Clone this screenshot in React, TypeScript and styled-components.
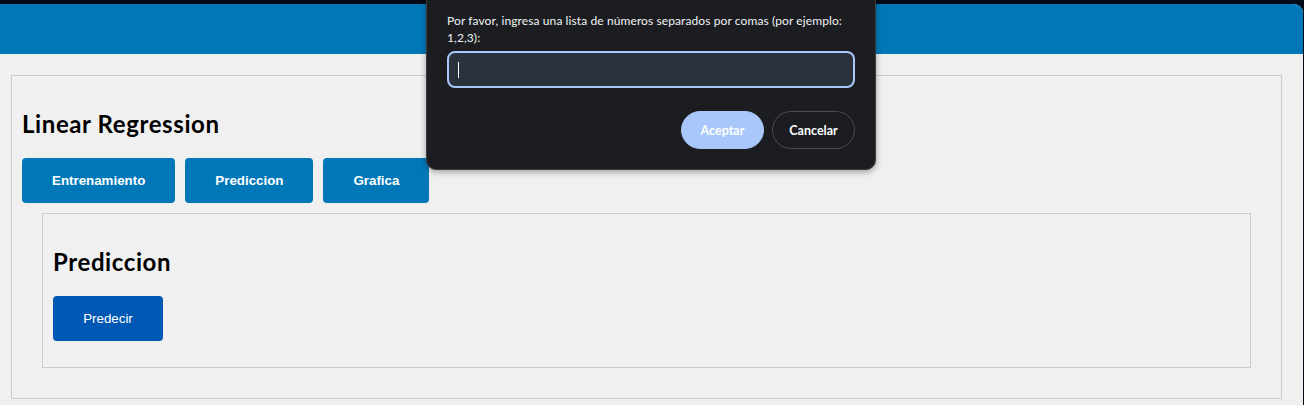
import { createGlobalStyle, styled } from "styled-components";

const GlobalStyle = createGlobalStyle`
  html, body {
    margin: 0;
    padding: 0;
    background: #020a18;
  }
  * {
    box-sizing: border-box;
  }
`;

const tabs = ["Entrenamiento", "Prediccion", "Grafica"];

const App = () => {
  return (
    <>
      <GlobalStyle />
      <Frame>
        <Header />
        <Main>
          <OuterBox>
            <Title>Linear Regression</Title>
            <TabRow>
              {tabs.map((tab) => (
                <TabButton key={tab}>{tab}</TabButton>
              ))}
            </TabRow>
            <Panel>
              <PanelTitle>Prediccion</PanelTitle>
              <PredictButton>Predecir</PredictButton>
            </Panel>
          </OuterBox>
        </Main>
      </Frame>
      <Dialog>
        <DialogText>
          Por favor, ingresa una lista de números separados por comas (por ejemplo:
          1,2,3):
        </DialogText>
        <PromptInput>
          <Caret />
        </PromptInput>
        <DialogActions>
          <PillButton $primary>Aceptar</PillButton>
          <PillButton>Cancelar</PillButton>
        </DialogActions>
      </Dialog>
    </>
  );
};

export default App;

const Frame = styled.div`
  margin: 4px 1px 0 0;
  min-height: 401px;
  background: #f0f0f0;
  border-top-right-radius: 9px;
  overflow: hidden;
`;

const Header = styled.header`
  height: 50px;
  background: #0078b8;
`;

const Main = styled.main`
  padding: 21px 21px 0 11px;
`;

const OuterBox = styled.section`
  border: 1px solid #cccccc;
  padding: 10px;
`;

const Title = styled.h2`
  margin: 23px 0 20px;
  font-family: Lato, "Open Sans", sans-serif;
  font-size: 24px;
  font-weight: 700;
  line-height: 29px;
  letter-spacing: 0.6px;
  color: #000;
`;

const TabRow = styled.div`
  display: flex;
  gap: 10px;
`;

const TabButton = styled.button`
  height: 45px;
  padding: 0 30px;
  border: none;
  border-radius: 4px;
  background: #0078b8;
  color: #fff;
  font-family: "Liberation Sans", Arial, sans-serif;
  font-size: 13.33px;
  font-weight: 700;
  cursor: pointer;
`;

const Panel = styled.div`
  margin: 10px 20px 20px;
  border: 1px solid #cccccc;
  padding: 10px 10px 26px;
`;

const PanelTitle = styled.h3`
  margin: 23px 0 20px;
  font-family: Lato, "Open Sans", sans-serif;
  font-size: 24px;
  font-weight: 700;
  line-height: 29px;
  letter-spacing: 0.6px;
  color: #000;
`;

const PredictButton = styled.button`
  width: 110px;
  height: 45px;
  border: none;
  border-radius: 4px;
  background: #0058b5;
  color: #fff;
  font-family: "Liberation Sans", Arial, sans-serif;
  font-size: 13.33px;
  font-weight: 400;
  cursor: pointer;
`;

const Dialog = styled.div`
  position: absolute;
  top: -12px;
  left: 426px;
  width: 450px;
  padding: 23px 20px 20px;
  background: #1b1d21;
  border: 1px solid #3a3d42;
  border-radius: 10px;
  box-shadow: 0 2px 6px rgba(0, 0, 0, 0.35);
`;

const DialogText = styled.p`
  margin: 0 0 5px;
  font-family: Lato, "Open Sans", sans-serif;
  font-size: 12px;
  line-height: 17px;
  letter-spacing: 0.1px;
  color: #f1f3f4;
`;

const PromptInput = styled.div`
  display: flex;
  align-items: center;
  height: 37px;
  padding: 0 9px;
  background: #2a333d;
  border: 2px solid #a8c7fa;
  border-radius: 8px;
`;

const Caret = styled.span`
  width: 1px;
  height: 16px;
  background: #ffffff;
`;

const DialogActions = styled.div`
  display: flex;
  justify-content: flex-end;
  gap: 8px;
  margin-top: 23px;
`;

const PillButton = styled.button<{ $primary?: boolean }>`
  width: 83px;
  height: 38px;
  border-radius: 19px;
  border: 1px solid ${({ $primary }) => ($primary ? "#a8c7fa" : "#4a4d52")};
  background: ${({ $primary }) => ($primary ? "#a8c7fa" : "transparent")};
  color: #ffffff;
  font-family: Lato, "Open Sans", sans-serif;
  font-size: 12.5px;
  font-weight: 700;
  cursor: pointer;
`;
